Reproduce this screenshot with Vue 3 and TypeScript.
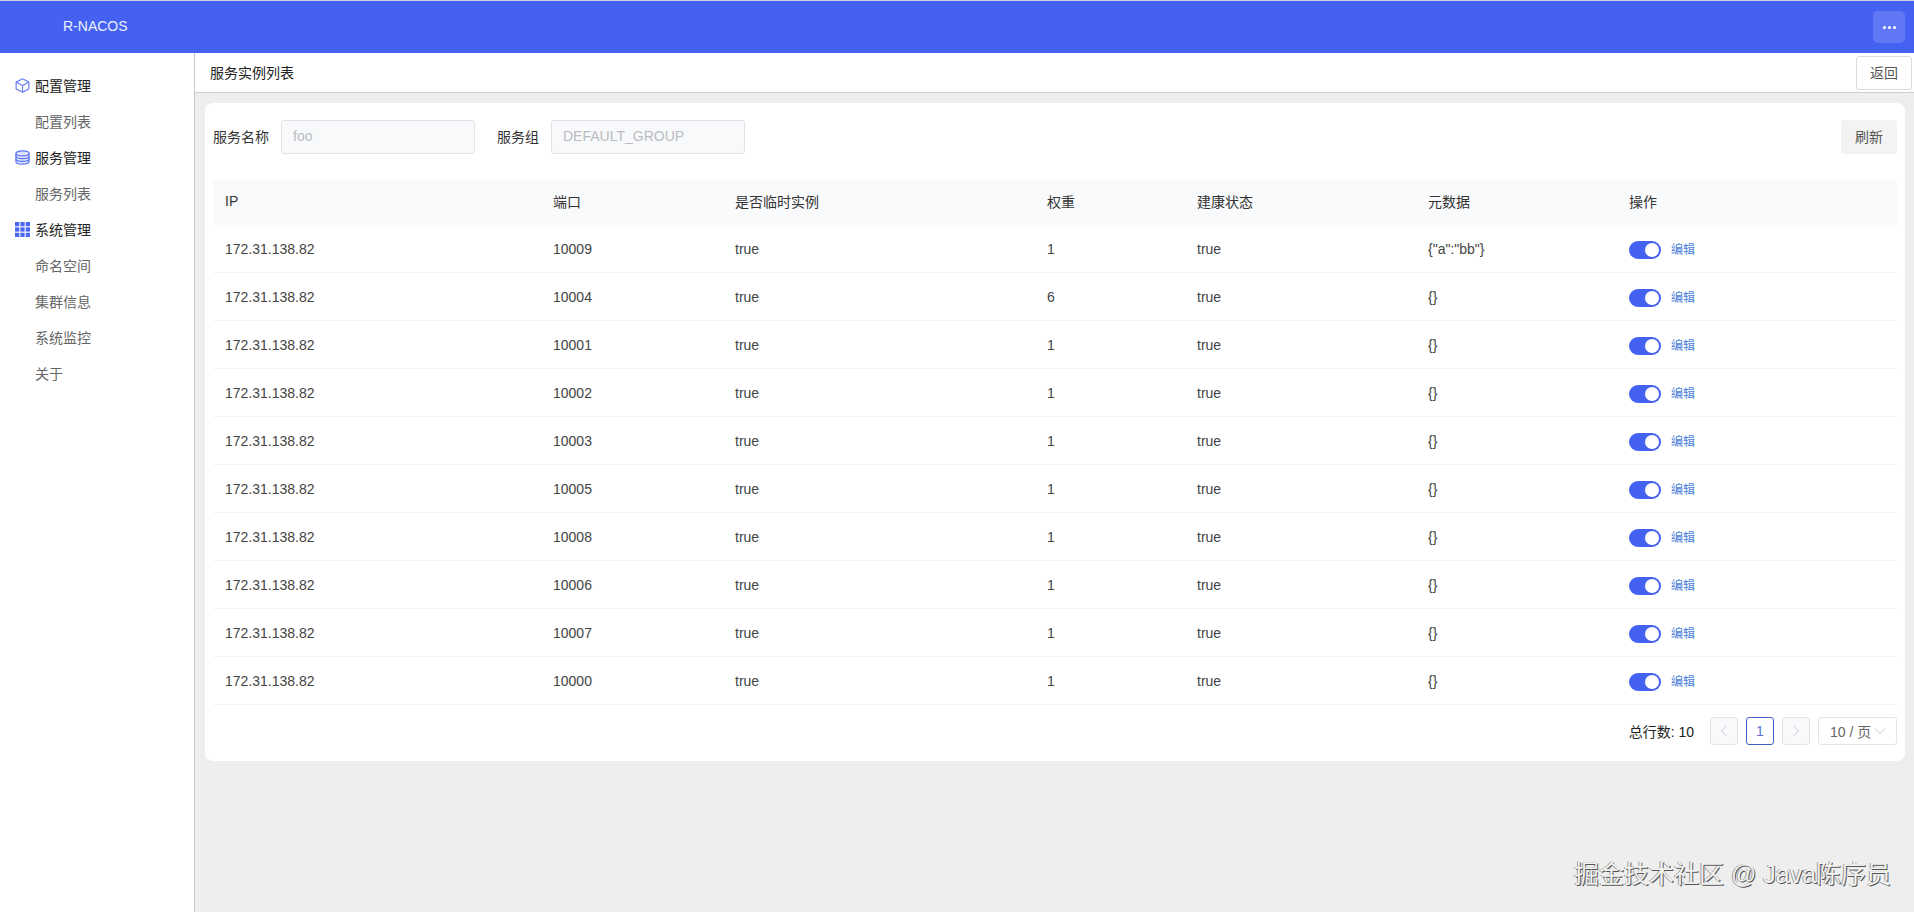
<script setup lang="ts">
interface IRow {
  port: number;
  weight: number;
  meta: string;
}

interface INavGroup {
  title: string;
  icon: string;
  items: string[];
}

const navGroups: INavGroup[] = [
  { title: "配置管理", icon: "cube", items: ["配置列表"] },
  { title: "服务管理", icon: "db", items: ["服务列表"] },
  { title: "系统管理", icon: "apps", items: ["命名空间", "集群信息", "系统监控", "关于"] },
];

const columns = ["IP", "端口", "是否临时实例", "权重", "建康状态", "元数据", "操作"];

const rows: IRow[] = [
  { port: 10009, weight: 1, meta: '{"a":"bb"}' },
  { port: 10004, weight: 6, meta: "{}" },
  { port: 10001, weight: 1, meta: "{}" },
  { port: 10002, weight: 1, meta: "{}" },
  { port: 10003, weight: 1, meta: "{}" },
  { port: 10005, weight: 1, meta: "{}" },
  { port: 10008, weight: 1, meta: "{}" },
  { port: 10006, weight: 1, meta: "{}" },
  { port: 10007, weight: 1, meta: "{}" },
  { port: 10000, weight: 1, meta: "{}" },
];
</script>

<template>
  <div class="page">
    <header class="topbar">
      <span class="brand">R-NACOS</span>
      <button class="more-btn">
        <i></i><i></i><i></i>
      </button>
    </header>

    <div class="body">
      <aside class="sidebar">
        <template v-for="group in navGroups" :key="group.title">
          <div class="nav-group">
            <svg v-if="group.icon === 'cube'" class="nav-icon" viewBox="0 0 16 16" fill="none" stroke="#6f84f3" stroke-width="1.3" stroke-linejoin="round">
              <path d="M8 .8 14.8 4.4v7.2L8 15.2 1.2 11.6V4.4Z" />
              <path d="M1.2 4.4 8 8l6.8-3.6M8 8v7.2" />
            </svg>
            <svg v-else-if="group.icon === 'db'" class="nav-icon" viewBox="0 0 16 16" fill="#dfe4fd" stroke="#5a73f3" stroke-width="1.3">
              <path d="M1 3.6v8.8c0 1.4 3.1 2.6 7 2.6s7-1.2 7-2.6V3.6" />
              <ellipse cx="8" cy="3.6" rx="7" ry="2.6" />
              <path d="M1 6.6c0 1.4 3.1 2.6 7 2.6s7-1.2 7-2.6M1 9.6c0 1.4 3.1 2.6 7 2.6s7-1.2 7-2.6" fill="none" />
            </svg>
            <svg v-else class="nav-icon" viewBox="0 0 14 14" fill="#4c68f2">
              <rect x="0" y="0" width="4" height="4" />
              <rect x="5" y="0" width="4" height="4" />
              <rect x="10" y="0" width="4" height="4" />
              <rect x="0" y="5" width="4" height="4" />
              <rect x="5" y="5" width="4" height="4" />
              <rect x="10" y="5" width="4" height="4" />
              <rect x="0" y="10" width="4" height="4" />
              <rect x="5" y="10" width="4" height="4" />
              <rect x="10" y="10" width="4" height="4" />
            </svg>
            <span>{{ group.title }}</span>
          </div>
          <div v-for="item in group.items" :key="item" class="nav-item">{{ item }}</div>
        </template>
      </aside>

      <main class="main">
        <div class="subheader">
          <span class="subtitle">服务实例列表</span>
          <button class="back-btn">返回</button>
        </div>

        <section class="card">
          <div class="filter">
            <label class="filter-label">服务名称</label>
            <div class="fake-input">foo</div>
            <label class="filter-label second">服务组</label>
            <div class="fake-input">DEFAULT_GROUP</div>
            <button class="refresh-btn">刷新</button>
          </div>

          <div class="table">
            <div class="row head">
              <div v-for="col in columns" :key="col" class="cell">{{ col }}</div>
            </div>
            <div v-for="row in rows" :key="row.port" class="row">
              <div class="cell">172.31.138.82</div>
              <div class="cell">{{ row.port }}</div>
              <div class="cell">true</div>
              <div class="cell">{{ row.weight }}</div>
              <div class="cell">true</div>
              <div class="cell">{{ row.meta }}</div>
              <div class="cell ops">
                <span class="switch"><i></i></span>
                <a class="edit">编辑</a>
              </div>
            </div>
          </div>

          <div class="pager">
            <span class="total">总行数: 10</span>
            <button class="page-btn muted">
              <svg width="12" height="12" viewBox="0 0 12 12" fill="none" stroke="#c4c7cd" stroke-width="1"><path d="M8 1.5 3.5 6 8 10.5" /></svg>
            </button>
            <button class="page-btn current">1</button>
            <button class="page-btn muted">
              <svg width="12" height="12" viewBox="0 0 12 12" fill="none" stroke="#c4c7cd" stroke-width="1"><path d="M4 1.5 8.5 6 4 10.5" /></svg>
            </button>
            <div class="page-size">
              <span>10 / 页</span>
              <svg width="12" height="12" viewBox="0 0 12 12" fill="none" stroke="#c4c7cd" stroke-width="1"><path d="M1.2 3.8 6 8.4l4.8-4.6" /></svg>
            </div>
          </div>
        </section>
      </main>
    </div>

    <div class="watermark">掘金技术社区 @ Java陈序员</div>
  </div>
</template>

<style>
html,
body {
  margin: 0;
  padding: 0;
}
</style>

<style scoped>
.page {
  position: relative;
  width: 1914px;
  height: 912px;
  overflow: hidden;
  display: flex;
  flex-direction: column;
  padding-top: 1px;
  box-sizing: border-box;
  background: #c9cfe6;
  font-family: "Liberation Sans", "Noto Sans CJK SC", sans-serif;
  font-size: 14px;
  color: #444;
}

button {
  font-family: inherit;
  padding: 0;
  box-sizing: border-box;
}

.topbar {
  height: 52px;
  flex: none;
  box-sizing: border-box;
  background: #4561f2;
  display: flex;
  align-items: center;
  justify-content: space-between;
  padding: 0 9px 0 63px;
}

.brand {
  color: #eef1fe;
  font-size: 14px;
  margin-bottom: 2px;
}

.more-btn {
  width: 32px;
  height: 32px;
  border: none;
  border-radius: 5px;
  background: #6078f5;
  display: flex;
  align-items: center;
  justify-content: center;
  gap: 2px;
}

.more-btn i {
  width: 3px;
  height: 3px;
  border-radius: 50%;
  background: #fff;
}

.body {
  flex: 1;
  display: flex;
  min-height: 0;
  background: #eee;
}

.sidebar {
  width: 195px;
  flex: none;
  box-sizing: border-box;
  background: #fff;
  border-right: 1px solid #c8c8c8;
  padding-top: 14px;
}

.nav-group,
.nav-item {
  height: 36px;
  display: flex;
  align-items: center;
  padding-left: 35px;
  font-size: 14px;
}

.nav-group {
  position: relative;
  color: #222;
}

.nav-icon {
  position: absolute;
  left: 15px;
  top: 11px;
  width: 15px;
  height: 15px;
}

.nav-item {
  color: #666;
}

.main {
  flex: 1;
  min-width: 0;
  display: flex;
  flex-direction: column;
}

.subheader {
  height: 40px;
  flex: none;
  box-sizing: border-box;
  background: #fff;
  border-bottom: 1px solid #cfcfcf;
  display: flex;
  align-items: center;
  justify-content: space-between;
  padding: 0 2px 0 15px;
}

.subtitle {
  color: #222;
  margin-bottom: 2px;
}

.back-btn {
  width: 56px;
  height: 34px;
  background: #fff;
  border: 1px solid #dcdcdc;
  border-radius: 3px;
  color: #555;
  font-size: 14px;
  padding-bottom: 1px;
}

.card {
  margin: 10px 9px 0 10px;
  height: 658px;
  box-sizing: border-box;
  background: #fff;
  border-radius: 8px;
  padding: 17px 8px 0 8px;
}

.filter {
  display: flex;
  align-items: center;
  height: 34px;
}

.filter-label {
  color: #333;
  margin-right: 12px;
  margin-bottom: 3px;
}

.filter-label.second {
  margin-left: 22px;
}

.fake-input {
  width: 194px;
  height: 34px;
  box-sizing: border-box;
  border: 1px solid #e1e3e7;
  border-radius: 3px;
  background: #f8f9fa;
  color: #b9bcc2;
  padding-left: 11px;
  line-height: 31px;
}

.refresh-btn {
  margin-left: auto;
  width: 56px;
  height: 34px;
  border: none;
  border-radius: 3px;
  background: #f3f3f3;
  color: #555;
  font-size: 14px;
  padding-bottom: 3px;
}

.table {
  margin-top: 26px;
}

.row {
  display: grid;
  grid-template-columns: 328px 182px 312px 150px 231px 201px 280px;
  height: 48px;
  box-sizing: border-box;
  border-bottom: 1px solid #f4f4f5;
}

.row.head {
  height: 45px;
  background: #f9fafb;
  border-bottom: none;
  color: #333;
}

.row.head .cell {
  padding-bottom: 3px;
}

.cell {
  display: flex;
  align-items: center;
  padding-left: 12px;
}

.ops {
  gap: 10px;
}

.switch {
  width: 32px;
  height: 18px;
  margin-top: 2px;
  border-radius: 9px;
  background: #4561f2;
  display: flex;
  align-items: center;
  justify-content: flex-end;
  padding-right: 2px;
  box-sizing: border-box;
}

.switch i {
  width: 14px;
  height: 14px;
  border-radius: 50%;
  background: #fff;
}

.edit {
  color: #4a80dc;
  font-size: 12px;
}

.pager {
  display: flex;
  align-items: center;
  justify-content: flex-end;
  margin-top: 12px;
  height: 28px;
  gap: 8px;
}

.total {
  color: #222;
  font-size: 14px;
  margin-right: 8px;
}

.page-btn {
  width: 28px;
  height: 28px;
  display: flex;
  align-items: center;
  justify-content: center;
  border-radius: 3px;
  border: 1px solid #e3e4e8;
  background: #fff;
  font-size: 14px;
}

.page-btn.muted {
  background: #f9f9fb;
}

.page-btn.current {
  border-color: #4460c8;
  color: #5a70d8;
}

.page-size {
  width: 79px;
  height: 28px;
  box-sizing: border-box;
  border: 1px solid #e3e4e8;
  border-radius: 3px;
  display: flex;
  align-items: center;
  justify-content: space-between;
  padding: 0 10px 0 11px;
  color: #666;
  font-size: 14px;
}

.watermark {
  position: absolute;
  left: 1574px;
  top: 858px;
  font-size: 25px;
  line-height: 32px;
  white-space: nowrap;
  color: #f2f2f2;
  text-shadow: 1px 1px 0 #555, -1px 0 0 #999;
}
</style>
